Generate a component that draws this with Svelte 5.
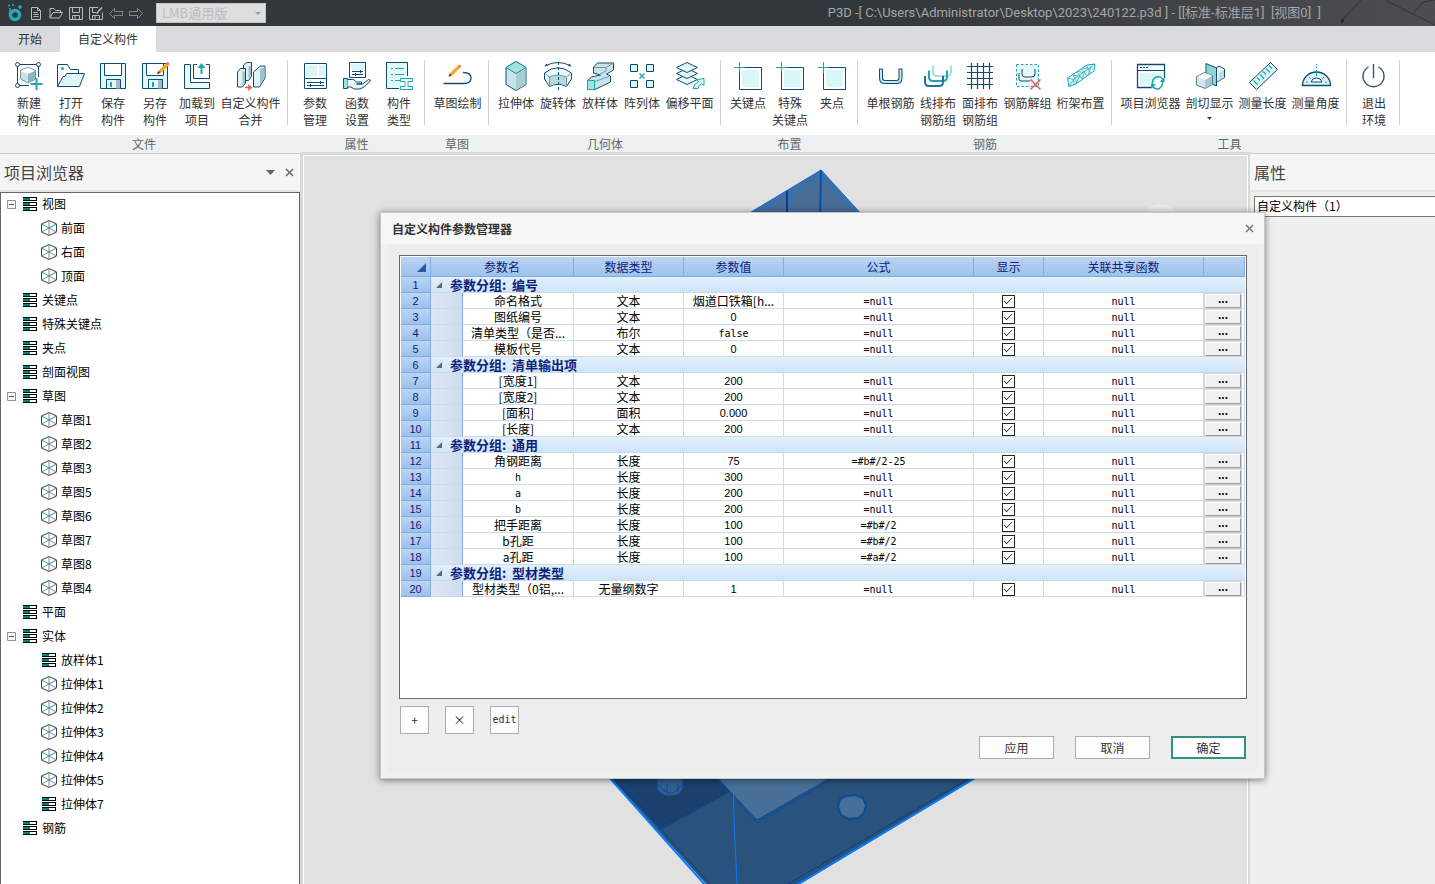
<script lang="ts">
  type Tool = { icon: string; label: string; size?: string; menu?: boolean };
  type Node = { name: string; icon: string; open?: boolean; children?: Node[] };
  type Param = { name: string; type: string; value: string; formula: string };

  const pencil = `<path d="M18.300 13.800l1-3L27.500 3l2.300 2.300-8.300 8z" fill="#f6a821"/><path d="M27.500 3l1-1q1.500 0 2.300 2.300l-1 1z" fill="#ee6a6a"/><path d="M18 14.200l1.200-3.200 2 2z" fill="#4a3a2a"/>`;
  const floppy = `<path d="M3.500 3.500H28.500V28.500H3.500z" fill="#dff7f8" stroke="#0f4c75"/><path d="M7.500 3.500V15.500H24.500V3.500z" fill="#fff" stroke="#0f4c75"/><path d="M19 19.500h5v9h-5z" fill="#a9b8c0"/><path d="M9.500 28.500V19.500H23.500V28.500" fill="none" stroke="#0f4c75"/><path d="M13 22h2v5h-2z" fill="#1ea5b0"/>`;
  const keypoint = `<path d="M7.500 7.500H29.500V29.500H7.500z" fill="#fff" stroke="#0f4c75"/><path d="M10 10h17v17h-17z" fill="#d9f6f8"/><path d="M7.500 2V13M2 7.500H13" stroke="#1ea5b0"/>`;

  const icons: Record<string, string> = {
    create: `<path d="M6 4.500H24M4.500 6V24M25.500 6V17M6 25.500H16" stroke="#0f4c75" fill="none"/><g fill="#fff" stroke="#0f4c75"><circle cx="4.500" cy="4.500" r="2"/><circle cx="25.500" cy="4.500" r="2"/><circle cx="4.500" cy="25.500" r="2"/></g><path d="M15 7l7.500 3.500V19L15 23 7.500 19v-8.500z" fill="#c9e4e8" stroke="#6f8f9c"/><path d="M8 11l7 3 7-3-7-3.500z" fill="#fff"/><path d="M15 14v8.500l7-4V11z" fill="#8fb6be"/><path d="M23.500 18v12M17.500 24h12" stroke="#1ea5b0" stroke-width="2"/>`,
    open: `<path d="M2.500 26.500V4.500H12.500L15.500 9.500H23.500V13.500" fill="none" stroke="#0f4c75"/><circle cx="7.500" cy="8.500" r="1.500" fill="#1ea5b0"/><path d="M11.500 13.500H29.500L24.500 26.500H2.500L8 16.500H10z" fill="#dff7f8" stroke="#0f4c75"/>`,
    save: floppy,
    saveas: floppy + pencil,
    load: `<path d="M8.500 4.500H3.500V28.500H28.500V22.500H9.500V4.500z" fill="#eefafb" stroke="#0f4c75"/><path d="M16 4.500H12.500V18.500H28.500V4.500H25" fill="none" stroke="#0f4c75"/><path d="M20.500 14V6" stroke="#1ea5b0" stroke-width="2"/><path d="M16.500 8l4-5 4 5z" fill="#1ea5b0"/>`,
    merge: `<g stroke="#0f4c75" fill="#dff2f5"><path d="M8.500 5l3-2.500h5v14l-3 4h-5z"/><path d="M2.500 12l3-3.500h5v14.500l-3 4h-5z"/><path d="M18.500 12l7-6h4.500v12l-5.500 9h-6z"/></g><path d="M7.500 11.500h2.500v11l-2.500 3.500zM13.500 6h2.500v10l-2.500 4zM25 9l4.500-2v10.500L25 25z" fill="#9cc3ca"/><path d="M10 27.500h5M13 25l3 2.500-3 2.500" stroke="#e85050" fill="none" stroke-width="1.500"/>`,
    params: `<path d="M5.500 3.500H27.500V28.500H5.500z" fill="#fff" stroke="#0f4c75"/><path d="M7 5h11v11h-11zM20 5h6v11h-6z" fill="#d9f6f8"/><path d="M5.500 18.500H27.500M8 22.500H25M8 25.500H25M21.500 21v3M11.500 24v3" stroke="#0f4c75"/>`,
    func: `<path d="M8.500 2.500H24.500V17.500H8.500z" fill="#fff" stroke="#0f4c75"/><path d="M10 4h13v6H10z" fill="#d9f6f8"/><path d="M11 11.500H22M11 14.500H22M19.500 10v3M14.500 13v3" stroke="#0f4c75"/><path d="M2.500 18.500h4v10h-4z" fill="#9fe0e4" stroke="#0f4c75"/><path d="M6.500 19.500h6l3 2.500h5v2h-5 6l6-4.500q3 0 1.500 2l-6 5.500-4 2h-6l-3-2h-3.500" fill="#e8f6f8" stroke="#0f4c75"/>`,
    types: `<path d="M16 28.500H3.500V2.500H24.500V16" fill="#e3f8f9" stroke="#0f4c75"/><path d="M8 8.500h2M8 14.500h2M8 20.500h2M12 8.500h9M12 14.500h9M12 20.500h5" stroke="#1ea5b0"/><path d="M17.500 18.500h12v3h-4.500v5h4.500v3h-12v-3h4.500v-5h-4.500z" fill="#fff" stroke="#1ea5b0"/>`,
    sketch: `<path d="M1.500 23.500H22Q29 23.500 29 18T21 12.500" fill="none" stroke="#0f4c75" stroke-width="1.300"/><g transform="translate(-11.500 2.500)">${pencil}</g>`,
    extrude: `<path d="M16 1.500l10 6v17l-10 6-10-6v-17z" fill="#c7e4e8" stroke="#0f4c75"/><path d="M16 13.500v16.500l9.500-5.500V8z" fill="#a9cdd3"/><path d="M16 1.500l10 6-10 6-10-6z" fill="#a5e3e0" stroke="#1e8f98"/>`,
    revolve: `<path d="M4 5.500Q16-.5 28 5.500" fill="none" stroke="#0f4c75"/><path d="M2.500 6.500l2-3 1.500 2.500zM29.500 6.500l-2-3-1.500 2.500z" fill="#0f4c75"/><path d="M2.500 13Q16 2.500 29.500 13V19L24.500 26.500Q16 22 7.500 26.500L2.500 19z" fill="#eef8fa" stroke="#0f4c75"/><path d="M7.500 17Q16 13 24.500 17V26Q16 21.500 7.500 26z" fill="#b7d8dd"/><path d="M2.500 13L7.500 17Q16 13 24.500 17L29.500 13M7.500 17v9M24.500 17v9" fill="none" stroke="#6f9aa8"/><path d="M16.500 2v28" stroke="#0f4c75" stroke-dasharray="3 2"/>`,
    loft: `<path d="M3.500 20.500l4-3.500 9-2-7-2V7l4-4h16v7l-7 4 4 2v6L11 29.500H3.500z" fill="#c9e4e8" stroke="#0f4c75"/><path d="M10 7.500h12l7-4M22 8v3l-6 3M11 21.500l14-5" fill="none" stroke="#6f9aa8"/><path d="M3.500 20.500H10.500V29.500H3.500z" fill="#a5e3e0" stroke="#1ea5b0"/>`,
    array: `<g fill="#d9f6f8" stroke="#0f4c75"><path d="M4.500 4.500h7v7h-7zM20.500 4.500h7v7h-7zM4.500 20.500h7v7h-7zM20.500 20.500h7v7h-7z"/></g><path d="M13.500 13.500l5 5M18.500 13.500l-5 5" stroke="#1ea5b0" stroke-width="1.300"/>`,
    offset: `<g fill="#e3f6f8" stroke="#0f4c75"><path d="M13 14.500l10.500 5L13 24.500 2.500 19.500z"/><path d="M13 8.500l10.500 5L13 18.500 2.500 13.500z"/><path d="M13 2.500l10.500 5L13 12.500 2.500 7.500z"/></g><path d="M19 28.500q1-5 5.500-6.500l-1.500-2.500 7-1v7l-2.500-1.500q-3 1-3.500 4.500z" fill="#dff7f8" stroke="#1ea5b0"/>`,
    keypoint,
    rebar: `<path d="M6 8.500V18q0 4 4 4H21.500q4 0 4-4V8.500" fill="none" stroke="#0f4c75" stroke-width="4"/><path d="M6 9.500V18q0 4 4 4H21.500q4 0 4-4V9.500" fill="none" stroke="#c9e4ec" stroke-width="2"/>`,
    rebarline: `<g fill="none" stroke-width="2"><path d="M11 5.500V12q0 4 4 4h10q4 0 4-4V5.500" stroke="#a5e0df"/><path d="M7 10.500V17q0 4 4 4h10q4 0 4-4v-6.500" stroke="#1ea5b0"/><path d="M3 16v6q0 4 4 4h10q4 0 4-4v-6" stroke="#2d6d9c"/></g>`,
    rebarface: `<path d="M7.500 3V29M13.500 3V29M19.500 3V29M25.500 3V29M3 6.500H29M3 12.500H29M3 18.500H29M3 24.500H29" stroke="#0f4c75" stroke-width="1.200"/>`,
    ungroup: `<path d="M4.500 4.500H26.500V26.500H4.500z" fill="#e6f8f9" stroke="#1ea5b0" stroke-dasharray="2.500 2"/><path d="M10 9v5q0 3 3 3h7q3 0 3-3V9M7 13v6q0 2 2 2h9" fill="none" stroke="#0f4c75"/><path d="M18.500 19.500l10 10M28.500 19.500l-10 10" stroke="#ee5a5a" stroke-width="1.500"/>`,
    truss: `<path d="M2.500 18L22 5l8-1-1 7L11 24l-7 2.500z" fill="#d9f6f8" stroke="#1ea5b0"/><path d="M2.500 18l6 1.500L30 4M8.500 19.500L9 25M4 26.500l4.500-7M8 15l4 8M12 12l5 7M17 9l5 7M22 6l3 7M8 15l5 1M13 11.500l5 1M18 8l5 1M11 24l4-9M17 19l3-8M23 15l3-8" fill="none" stroke="#1ea5b0" stroke-width=".7"/>`,
    browser: `<path d="M16 27.500H2.500V4.500H29.500V18" fill="#fff" stroke="#0f4c75" stroke-width="1.300"/><path d="M2.500 10.500H29.500M5 7.500h2M8 7.500h2M11 7.500h2" stroke="#0f4c75"/><path d="M5 13h21v4l-9 8H5z" fill="#d9f6f8"/><path d="M17.500 25q-1-6 4-8M27.500 21q1 5-4 8M20 17.500q6-2.500 8.500 3M25 28.500q-5 1.500-7.500-2.500" fill="none" stroke="#1ea5b0" stroke-width="1.500"/><path d="M29.500 17v5h-5zM16 29v-5h5z" fill="#1ea5b0"/>`,
    section: `<path d="M19 10l6-4 5.500 3v8.500L23 22l-4-2z" fill="#eef7f9" stroke="#0f4c75"/><path d="M24.500 13.500l5.500-4v8l-5.500 3.500z" fill="#c3d9de"/><path d="M12 3.500l10.500 4.500V26L12 21z" fill="#8ed6d5" stroke="#0f4c75"/><path d="M2.500 16.500l8-4 8 3v9l-7.500 4L2.500 25z" fill="#d4e4e8" stroke="#5a7f90"/><path d="M11 20l7-4v8.500l-7 3.500z" fill="#a9c4cb"/><path d="M3 16.500l8 3.500 7-4.500-7.500-2.500z" fill="#f4fafb"/>`,
    ruler: `<path d="M2.500 22.500L23.500 2.500 30.500 9.500 9.500 29.500z" fill="#d9f6f8" stroke="#0f4c75" stroke-linejoin="round"/><path d="M6.500 20.500l4 4M10 17.500l3 3M13 14.500l4 4M16 11.500l3 3M19 8.500l4 4M22 5.500l3 3" stroke="#1ea5b0" stroke-width="1.200"/>`,
    angle: `<path d="M2.500 25.500a14 13.500 0 0 1 28 0z" fill="#d9f6f8" stroke="#0f4c75" stroke-width="1.300"/><path d="M11 22q1-4 5.500-4t5.500 4z" fill="#fff" stroke="#0f4c75"/><path d="M6 22l2 .5M9 17l1.500 1.500M24 17l-1.500 1.500M27 22l-2 .5M16.500 13v3" stroke="#1ea5b0"/><path d="M16.500 4v8" stroke="#1ea5b0" stroke-dasharray="1.500 1.500"/>`,
    exit: `<path d="M10.500 7A10.500 10.500 0 1 0 20.500 7" fill="none" stroke="#33556b" stroke-width="1.400"/><path d="M15.500 4v14" stroke="#1b5f80" stroke-width="1.400"/>`
  };

  const quick = [
    `<path d="M2.500 1.500h6l3 3v9h-9zM8.500 1.500v3h3M4.500 6.500h4M4.500 8.500h5M4.500 10.500h5"/>`,
    `<path d="M1 12V2.500h4l1.500 2h5v2M1 12l3-5.500h9.500L10.500 12z"/>`,
    `<path d="M.5 1.500h13v12H.5zM3.500 1.500v5h7v-5M3.500 13.500v-4h7v4M6 10v3"/>`,
    `<path d="M9 1.500H.5v12h13V6.500M3.500 1.500v5h3.500M3.500 13.500v-4h7v4M6 10v3"/><path d="M7.500 7.500L13 1.500" stroke-width="1.500"/>`,
    `<path d="M.5 7.500l5-5v3h8v4h-8v3z" opacity=".6"/>`,
    `<path d="M13.500 7.500l-5-5v3h-8v4h8v3z" opacity=".6"/>`
  ];
  const quickNames = ["新建", "打开", "保存", "另存", "撤销", "重做"];

  const groups: { title: string; tools: Tool[] }[] = [
    { title: "文件", tools: [
      { icon: "create", label: "新建\n构件" },
      { icon: "open", label: "打开\n构件" },
      { icon: "save", label: "保存\n构件" },
      { icon: "saveas", label: "另存\n构件" },
      { icon: "load", label: "加载到\n项目" },
      { icon: "merge", label: "自定义构件\n合并", size: "large" }
    ] },
    { title: "属性", tools: [
      { icon: "params", label: "参数\n管理" },
      { icon: "func", label: "函数\n设置" },
      { icon: "types", label: "构件\n类型" }
    ] },
    { title: "草图", tools: [{ icon: "sketch", label: "草图绘制", size: "medium" }] },
    { title: "几何体", tools: [
      { icon: "extrude", label: "拉伸体" },
      { icon: "revolve", label: "旋转体" },
      { icon: "loft", label: "放样体" },
      { icon: "array", label: "阵列体" },
      { icon: "offset", label: "偏移平面", size: "medium" }
    ] },
    { title: "布置", tools: [
      { icon: "keypoint", label: "关键点" },
      { icon: "keypoint", label: "特殊\n关键点" },
      { icon: "keypoint", label: "夹点" }
    ] },
    { title: "钢筋", tools: [
      { icon: "rebar", label: "单根钢筋", size: "medium" },
      { icon: "rebarline", label: "线排布\n钢筋组" },
      { icon: "rebarface", label: "面排布\n钢筋组" },
      { icon: "ungroup", label: "钢筋解组", size: "medium" },
      { icon: "truss", label: "桁架布置", size: "medium" }
    ] },
    { title: "工具", tools: [
      { icon: "browser", label: "项目浏览器", size: "large" },
      { icon: "section", label: "剖切显示", size: "medium", menu: true },
      { icon: "ruler", label: "测量长度", size: "medium" },
      { icon: "angle", label: "测量角度", size: "medium" }
    ] },
    { title: "", tools: [{ icon: "exit", label: "退出\n环境" }] }
  ];

  const cubes = (names: string[]): Node[] => names.map((name) => ({ name, icon: "cube" }));

  let tree: Node[] = $state([
    { name: "视图", icon: "list", open: true, children: cubes(["前面", "右面", "顶面"]) },
    { name: "关键点", icon: "list" },
    { name: "特殊关键点", icon: "list" },
    { name: "夹点", icon: "list" },
    { name: "剖面视图", icon: "list" },
    { name: "草图", icon: "list", open: true,
      children: cubes(["草图1", "草图2", "草图3", "草图5", "草图6", "草图7", "草图8", "草图4"]) },
    { name: "平面", icon: "list" },
    { name: "实体", icon: "list", open: true, children: [
      { name: "放样体1", icon: "list" },
      ...cubes(["拉伸体1", "拉伸体2", "拉伸体3", "拉伸体4", "拉伸体5"]),
      { name: "拉伸体7", icon: "list" }
    ] },
    { name: "钢筋", icon: "list" }
  ]);

  const p = (name: string, type: string, value: string, formula = "=null"): Param => ({ name, type, value, formula });

  const paramGroups: { title: string; start: number; params: Param[] }[] = [
    { title: "编号", start: 1, params: [
      p("命名格式", "文本", "烟道口铁箱[h..."),
      p("图纸编号", "文本", "0"),
      p("清单类型（是否...", "布尔", "false"),
      p("模板代号", "文本", "0")
    ] },
    { title: "清单输出项", start: 6, params: [
      p("[宽度1]", "文本", "200"),
      p("[宽度2]", "文本", "200"),
      p("[面积]", "面积", "0.000"),
      p("[长度]", "文本", "200")
    ] },
    { title: "通用", start: 11, params: [
      p("角钢距离", "长度", "75", "=#b#/2-25"),
      p("h", "长度", "300"),
      p("a", "长度", "200"),
      p("b", "长度", "200"),
      p("把手距离", "长度", "100", "=#b#/2"),
      p("b孔距", "长度", "100", "=#b#/2"),
      p("a孔距", "长度", "100", "=#a#/2")
    ] },
    { title: "型材类型", start: 19, params: [p("型材类型（0铝,...", "无量纲数字", "1")] }
  ];

  // digits and plain latin get their own faces, everything else stays in the CJK font
  function face(text: string) {
    if (/^[\d.]+$/.test(text)) return "num";
    return /^[\x20-\x7e]+$/.test(text) ? "mono" : "";
  }
</script>

{#snippet treeRow(node: Node, child: boolean)}
  <div class="row" class:child>
    {#if !child}
      {#if node.children}
        <button class="expander" aria-label="展开" onclick={() => (node.open = !node.open)}>
          <svg width="9" height="9" viewBox="0 0 9 9">
            <path d="M.5.5h8v8h-8z" fill="#f4f4f4" stroke="#919191" />
            <path d={node.open ? "M2 4.500h5" : "M2 4.500h5M4.500 2v5"} stroke="#3c5fae" />
          </svg>
        </button>
      {:else}
        <span class="expander"></span>
      {/if}
    {/if}
    <svg width="16" height="16" viewBox="0 0 16 16">
      {#if node.icon == "list"}
        {#each [1, 6, 11] as y}
          <rect x="1" {y} width="14" height="4" fill="#000" />
          <rect x="1" y={y + 1} width="7" height="2" fill="#008080" />
          <rect x="8" y={y + 1} width="6" height="2" fill="#fff" />
        {/each}
      {:else}
        <path d="M8 .5l7.500 3.500v8L8 15.500.5 12V4z" fill="#fff" stroke="#444" />
        <path d="M8 8v7.500M8 8L.5 12M8 8l7.500 4M8 .5V8" fill="none" stroke="#888" />
        <path d="M.5 4L8 8l7.500-4" fill="none" stroke="#2a9090" />
      {/if}
    </svg>
    <span>{node.name}</span>
  </div>
{/snippet}

<div class="window">
  <header class="titlebar">
    <svg class="logo" width="16" height="18" viewBox="0 0 16 18">
      <circle cx="8" cy="11" r="4.500" fill="none" stroke="#27a9b5" stroke-width="3.500" />
      <path d="M3 11V4M1 1.500h2M5 1h2M11 3h4M13 1v4" stroke="#27a9b5" stroke-width="1.500" />
    </svg>
    {#each quick as shape, i}
      <button class="quick" aria-label={quickNames[i]}>
        <svg width="14" height="15" viewBox="0 0 14 15" fill="none" stroke="#b4babd">{@html shape}</svg>
      </button>
    {/each}
    <div class="combo">
      <select disabled aria-label="版本"><option>LMB通用版</option></select>
      <svg width="6" height="3" viewBox="0 0 6 3"><path d="M0 0h6L3 3z" fill="#999" /></svg>
    </div>
    <div class="caption">P3D -[ C:\Users\Administrator\Desktop\2023\240122.p3d ] - [[标准-标准层1]&nbsp; [视图0]&nbsp; ]</div>
    <svg class="decor" width="94" height="26" viewBox="0 0 94 26">
      <path d="M0 21L20 0M44 0l50 25M72 14l10-12 12-2" fill="none" stroke="#303336" />
      <circle cx="1" cy="21" r="2" fill="#26292c" />
    </svg>
  </header>

  <nav class="tabs">
    <button class="tab">开始</button>
    <button class="tab active">自定义构件</button>
  </nav>

  <div class="ribbon">
    {#each groups as group}
      <section class="group">
        <div class="tools">
          {#each group.tools as tool}
            <button class="tool {tool.size ?? ''}">
              <svg width="32" height="32" viewBox="0 0 32 32">{@html icons[tool.icon]}</svg>
              <span>{tool.label}</span>
              {#if tool.menu}
                <svg class="caret" width="5" height="3" viewBox="0 0 5 3"><path d="M0 0h5L2.500 3z" fill="#444" /></svg>
              {/if}
            </button>
          {/each}
        </div>
        <div class="title">{group.title}</div>
      </section>
    {/each}
    <div class="group rest"><div class="title"></div></div>
  </div>

  <div class="workspace">
    <aside class="browser">
      <div class="panel-head">
        <h2>项目浏览器</h2>
        <button aria-label="菜单"><svg width="9" height="5" viewBox="0 0 9 5"><path d="M0 0h9L4.500 5z" fill="#666" /></svg></button>
        <button aria-label="关闭"><svg width="9" height="9" viewBox="0 0 9 9"><path d="M1 1l7 7M8 1L1 8" stroke="#666" stroke-width="1.500" /></svg></button>
      </div>
      <div class="tree">
        {#each tree as node}
          {@render treeRow(node, false)}
          {#if node.open}
            {#each node.children ?? [] as item}
              {@render treeRow(item, true)}
            {/each}
          {/if}
        {/each}
      </div>
    </aside>

    <main class="viewport">
      <svg width="943" height="728" viewBox="304 156 943 728">
        <ellipse cx="1161" cy="216" rx="16" ry="12" fill="#eaeaea" />
        <path d="M821 170L611 295V779L706 884H800L974 779V338z" fill="#29527c" />
        <path d="M821 170L740 219H866z" fill="#486c93" stroke="#0a7bff" />
        <path d="M821 177L745 221M821 177L862 219" fill="none" stroke="#0a7bff" />
        <path d="M821 170l-1 50" stroke="#0050b0" stroke-width="2" />
        <path d="M787 191v28" stroke="#0b3f80" stroke-width="2" />
        <path d="M790 191v28" stroke="#0a7bff" />
        <path d="M611 779l50 50 72-39V770H611z" fill="#1c406b" />
        <path d="M620 779l41 44v7M661 823l72-42M661 830l72-40" fill="none" stroke="#0a4a98" />
        <path d="M710 770l47 50 82-47v-10z" fill="#486f97" stroke="#0a4a98" />
        <path d="M708 770l49 53 84-49" fill="none" stroke="#0a4a98" />
        <path d="M657 775v14q4 7 13 7t13-7v-14z" fill="#335f8c" stroke="#0a4a98" />
        <path d="M657 784l10 9h6l10-9M667 784v9M678 784v8" fill="none" stroke="#0a4a98" />
        <path d="M733 770l1 50 3 64" fill="none" stroke="#0a7bff" />
        <path d="M846 796l9-1 8 3 3 7-2 8-6 5-9 1-8-4-3-8 2-8z" fill="#486f97" stroke="#0a4a98" stroke-width="2" />
        <path d="M608 776L706 886M977 777L795 886" fill="none" stroke="#0a7bff" stroke-width="2" />
        <path d="M617 781l95 105M968 779L788 884" fill="none" stroke="#0a3f80" />
      </svg>
    </main>

    <aside class="props">
      <div class="panel-head"><h2>属性</h2></div>
      <input class="subject" aria-label="对象" value="自定义构件（1）" />
    </aside>
  </div>

  <div class="dialog" role="dialog" aria-labelledby="dialog-title">
    <div class="dialog-head">
      <h1 id="dialog-title">自定义构件参数管理器</h1>
      <button aria-label="关闭"><svg width="9" height="9" viewBox="0 0 9 9"><path d="M1 1l7 7M8 1L1 8" stroke="#777" stroke-width="1.500" /></svg></button>
    </div>
    <div class="dialog-body">
      <div class="sheet">
        <table>
          <colgroup>
            <col class="c-num" /><col class="c-indent" /><col class="c-name" /><col class="c-type" />
            <col class="c-value" /><col class="c-formula" /><col class="c-show" /><col class="c-share" /><col />
          </colgroup>
          <thead>
            <tr>
              <th><svg class="corner" width="9" height="9" viewBox="0 0 9 9"><path d="M9 0v9H0z" fill="#3056a8" /></svg></th>
              <th colspan="2">参数名</th>
              <th>数据类型</th>
              <th>参数值</th>
              <th>公式</th>
              <th>显示</th>
              <th>关联共享函数</th>
              <th></th>
            </tr>
          </thead>
          <tbody>
            {#each paramGroups as group}
              <tr class="band">
                <th class="num">{group.start}</th>
                <td colspan="8">
                  <svg width="6" height="6" viewBox="0 0 6 6"><path d="M6 0v6H0z" fill="#666" /></svg>
                  参数分组: &nbsp;{group.title}
                </td>
              </tr>
              {#each group.params as param, i}
                <tr>
                  <th class="num">{group.start + i + 1}</th>
                  <td class="indent"></td>
                  <td class={face(param.name)}>{param.name}</td>
                  <td>{param.type}</td>
                  <td class={face(param.value)}>{param.value}</td>
                  <td class="mono">{param.formula}</td>
                  <td><input type="checkbox" checked aria-label="显示 {param.name}" /></td>
                  <td class="mono">null</td>
                  <td class="more"><button>...</button></td>
                </tr>
              {/each}
            {/each}
          </tbody>
        </table>
      </div>
      <div class="edit-bar">
        <button>+</button>
        <button>×</button>
        <button class="mono">edit</button>
      </div>
      <div class="actions">
        <button>应用</button>
        <button>取消</button>
        <button class="primary">确定</button>
      </div>
    </div>
  </div>
</div>

<style>
  :global(body) {
    margin: 0;
  }

  .window {
    position: relative;
    display: flex;
    flex-direction: column;
    height: 100vh;
    overflow: hidden;
    background: #efefef;
    font: 12px/16px "Noto Sans CJK SC", sans-serif;
    color: #000;
  }

  button, input, select {
    margin: 0;
    padding: 0;
    border: 0;
    background: none;
    font: inherit;
    color: inherit;
  }

  svg {
    display: block;
    flex: none;
  }

  h1, h2 {
    margin: 0;
    font-weight: 400;
  }

  .titlebar {
    display: flex;
    align-items: center;
    flex: none;
    gap: 6px;
    height: 26px;
    padding-left: 7px;
    background: linear-gradient(90deg, #32373b 60%, #4b4e51);
  }

  .quick {
    width: 14px;
  }

  .combo {
    display: flex;
    align-items: center;
    width: 110px;
    height: 20px;
    margin-left: 7px;
    box-sizing: border-box;
    border: 1px solid #c4c4c4;
    background: #dedede;
  }

  .combo select {
    flex: 1;
    padding-left: 5px;
    appearance: none;
    font-size: 13px;
    color: #bcbcbc;
    opacity: 1;
  }

  .combo svg {
    margin-right: 4px;
  }

  .caption {
    flex: 1;
    text-align: right;
    white-space: nowrap;
    font-family: Roboto, "Noto Sans CJK SC", sans-serif;
    font-size: 13px;
    color: #a3a6a8;
  }

  .decor {
    margin-left: 14px;
  }

  .tabs {
    display: flex;
    flex: none;
    height: 26px;
    background: #d9dbdd;
  }

  .tab {
    width: 60px;
    color: #333;
  }

  .tab.active {
    width: 96px;
    background: #fff;
  }

  .ribbon {
    display: flex;
    flex: none;
    background: #fff;
    border-bottom: 1px solid #c8cacb;
  }

  .group {
    display: flex;
    flex-direction: column;
    justify-content: flex-end;
  }

  .tools {
    display: flex;
    height: 65px;
    margin: 8px 0 10px;
    padding: 0 4px 0 6px;
    border-right: 1px solid #d0d0d0;
  }

  .group:first-child .tools {
    padding-left: 8px;
  }

  .rest {
    flex: 1;
  }

  .tool {
    display: flex;
    flex-direction: column;
    align-items: center;
    width: 42px;
    line-height: 17px;
    white-space: pre;
    color: #333;
  }

  .tool.medium {
    width: 53px;
  }

  .tool.large {
    width: 65px;
  }

  .tool span {
    margin-top: 2px;
  }

  .tool .caret {
    margin-top: 6px;
  }

  .title {
    height: 18px;
    line-height: 18px;
    text-align: center;
    background: #edf1f2;
    color: #666;
  }

  .workspace {
    display: flex;
    flex: 1;
    min-height: 0;
  }

  .browser {
    display: flex;
    flex-direction: column;
    width: 300px;
    flex: none;
  }

  .panel-head {
    display: flex;
    align-items: center;
    gap: 10px;
    height: 36px;
    padding: 0 6px 0 4px;
    background: #f5f5f5;
    border-bottom: 2px solid #e6e6e6;
  }

  .panel-head h2 {
    flex: 1;
    font-size: 16px;
    line-height: 24px;
    color: #444;
  }

  .tree {
    flex: 1;
    border: 1px solid #666;
    border-bottom: 0;
    background: #fff;
  }

  .row {
    display: flex;
    align-items: center;
    gap: 4px;
    height: 22px;
    padding: 0 0 2px 6px;
  }

  .row.child {
    padding-left: 40px;
  }

  .expander {
    width: 9px;
    margin-right: 2px;
  }

  .viewport {
    flex: 1;
    min-width: 0;
    margin: 1px 2px 0 3px;
    border: 1px solid #fff;
    border-bottom: 0;
    outline: 3px solid #d9d9d9;
    overflow: hidden;
    background: #e1e1e1;
  }

  .props {
    z-index: 1;
    width: 185px;
    flex: none;
    background: #efefef;
    overflow: hidden;
  }

  .subject {
    display: block;
    width: 100%;
    height: 21px;
    margin: 4px 0 0 4px;
    padding: 0 0 2px 2px;
    box-sizing: border-box;
    border: 1px solid #777;
    background: #fff;
  }

  .dialog {
    position: absolute;
    z-index: 2;
    left: 380px;
    top: 212px;
    display: flex;
    flex-direction: column;
    width: 885px;
    height: 567px;
    box-sizing: border-box;
    padding: 0 7px 7px;
    border: 1px solid #c6c6c6;
    background: #f0f0f0;
    box-shadow: 0 1px 7px rgba(0, 0, 0, 0.5);
  }

  .dialog-head {
    display: flex;
    align-items: center;
    justify-content: space-between;
    height: 31px;
    margin: 0 -7px;
    padding: 0 10px 0 11px;
    background: #f6f6f6;
  }

  .dialog-head h1 {
    font-size: 12px;
    font-weight: 700;
    color: #333;
  }

  .dialog-body {
    display: flex;
    flex-direction: column;
    flex: 1;
    padding: 11px 10px 12px 11px;
    background: #ededed;
  }

  .sheet {
    flex: 1;
    padding: 1px;
    border: 1px solid #696969;
    background: #fff;
  }

  table {
    width: 100%;
    table-layout: fixed;
    border-collapse: separate;
    border-spacing: 0;
  }

  .c-num { width: 30px; }
  .c-indent { width: 32px; }
  .c-name { width: 111px; }
  .c-type { width: 110px; }
  .c-value { width: 100px; }
  .c-formula { width: 190px; }
  .c-show { width: 70px; }
  .c-share { width: 160px; }

  th, td {
    height: 15px;
    padding: 0;
    border-right: 1px solid #ccdaee;
    border-bottom: 1px solid #ccdaee;
    line-height: 15px;
    text-align: center;
    white-space: nowrap;
  }

  th {
    border-color: #84ace4;
    background: linear-gradient(#bcd4f2, #9cc2ec);
    font-weight: 400;
    color: #10217c;
  }

  thead th {
    height: 19px;
  }

  .corner {
    margin: 2px 4px 0 auto;
  }

  .indent {
    border-right-color: #84ace4;
    background: linear-gradient(90deg, #dfe6f2, #cfdcf0);
  }

  .band td {
    border-right: 0;
    background: linear-gradient(#e2f1fb, #cfe4f7);
    font-size: 13px;
    font-weight: 700;
    text-align: left;
    color: #10217c;
  }

  .band svg {
    display: inline-block;
    margin: 0 5px;
    vertical-align: 2px;
  }

  .num {
    padding-top: 2px;
    height: 13px;
    line-height: 13px;
    font-family: "Liberation Sans", sans-serif;
    font-size: 11px;
  }

  .mono {
    font-family: "DejaVu Sans Mono", monospace;
    font-size: 10px;
  }

  td.mono {
    padding-top: 2px;
    height: 13px;
    line-height: 13px;
  }

  input[type="checkbox"] {
    display: block;
    width: 13px;
    height: 13px;
    margin: 2px auto 0;
    box-sizing: border-box;
    appearance: none;
    border: 1px solid #222;
    background: #fff;
  }

  input[type="checkbox"]:checked::after {
    content: "";
    display: block;
    width: 7px;
    height: 3px;
    margin: 2px 0 0 1px;
    border: solid #444;
    border-width: 0 0 1px 1px;
    transform: rotate(-45deg);
  }

  .more button {
    display: block;
    width: 36px;
    height: 14px;
    margin: 0 auto 0 1px;
    padding-bottom: 4px;
    border: 1px solid;
    border-color: #fff #999 #999 #fff;
    box-shadow: 0 0 0 1px #d4d4d4;
    background: #f0f0f0;
    font: 700 12px/8px "Liberation Sans", sans-serif;
  }

  .edit-bar {
    display: flex;
    gap: 16px;
    margin: 7px 0 2px 1px;
  }

  .edit-bar button {
    width: 29px;
    height: 28px;
    border: 1px solid #adadad;
    background: #fdfdfd;
    color: #333;
  }

  .actions {
    display: flex;
    justify-content: flex-end;
    gap: 21px;
    margin-right: 1px;
  }

  .actions button {
    width: 75px;
    height: 23px;
    border: 1px solid #adadad;
    background: #fdfdfd;
    color: #333;
  }

  .actions .primary {
    border: 2px solid #349082;
  }
</style>
